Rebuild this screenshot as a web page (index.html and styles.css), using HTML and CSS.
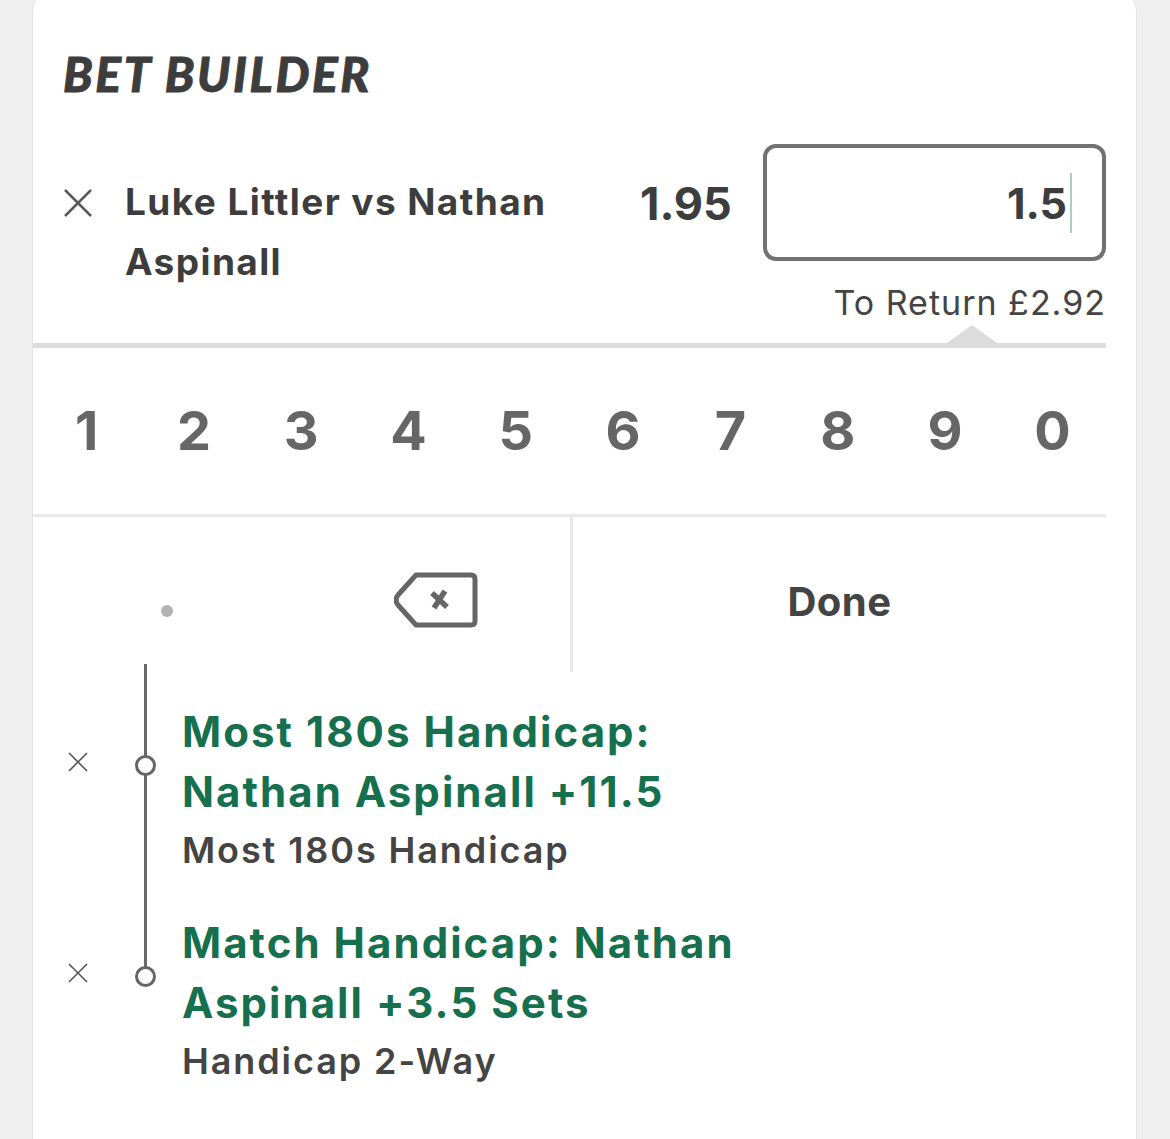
FILE: index.html
```html
<!DOCTYPE html>
<html lang="en">
<head>
<meta charset="utf-8">
<title>Bet Builder</title>
<link rel="stylesheet" href="styles.css">
</head>
<body>
<div class="card">
  <h1 class="title">BET BUILDER</h1>

  <div class="bet-row">
    <button class="remove" aria-label="Remove">
      <svg width="30" height="30" viewBox="0 0 30 30"><path d="M2 2 L28 28 M28 2 L2 28" stroke="#5a5a5a" stroke-width="2.5" fill="none"/></svg>
    </button>
    <div class="bet-name">Luke Littler vs Nathan Aspinall</div>
    <div class="odds">1.95</div>
    <div class="stake-col">
      <div class="stake">
        <span class="stake-value">1.5</span><span class="caret"></span>
      </div>
      <div class="returns">To Return £2.92</div>
    </div>
  </div>

  <div class="keypad">
    <div class="keys">
      <span class="key">1</span><span class="key">2</span><span class="key">3</span><span class="key">4</span><span class="key">5</span>
      <span class="key">6</span><span class="key">7</span><span class="key">8</span><span class="key">9</span><span class="key">0</span>
    </div>
    <div class="keys-bottom">
      <div class="keys-left">
        <span class="key-dot"></span>
        <span class="key-back">
          <svg width="84" height="56" viewBox="0 0 84 56"><path d="M22 3 H77 Q81 3 81 7 V49 Q81 53 77 53 H22 L4 33 Q0 28 4 23 Z" stroke="#666" stroke-width="5" fill="none" stroke-linejoin="round"/><path d="M38 21 L53 35 M51 19 L40 36" stroke="#666" stroke-width="5.5" fill="none"/></svg>
        </span>
      </div>
      <div class="key-done">Done</div>
    </div>
  </div>

  <div class="legs">
    <div class="leg">
      <span class="rail-top"></span>
      <span class="leg-x"><svg width="20" height="20" viewBox="0 0 20 20"><path d="M1 1 L19 19 M19 1 L1 19" stroke="#555" stroke-width="1.6" fill="none"/></svg></span>
      <span class="node"><span class="dot"></span></span>
      <div class="leg-title">Most 180s Handicap: Nathan Aspinall +11.5</div>
      <span class="rail-bottom"></span>
      <div class="leg-sub">Most 180s Handicap</div>
    </div>
    <div class="leg last">
      <span class="rail-top"></span>
      <span class="leg-x"><svg width="20" height="20" viewBox="0 0 20 20"><path d="M1 1 L19 19 M19 1 L1 19" stroke="#555" stroke-width="1.6" fill="none"/></svg></span>
      <span class="node"><span class="dot"></span></span>
      <div class="leg-title">Match Handicap: Nathan Aspinall +3.5 Sets</div>
      <span class="rail-bottom"></span>
      <div class="leg-sub">Handicap 2-Way</div>
    </div>
  </div>
</div>
</body>
</html>
```

FILE: styles.css
```css
* { box-sizing: border-box; }

html, body {
  margin: 0;
  padding: 0;
  background: #efefef;
  overflow: hidden;
}

body {
  font-family: Inter, Roboto, "Liberation Sans", Arial, sans-serif;
  color: #3d3d3d;
  height: 1139px;
}

.card {
  margin: -10px 0 0 32px;
  width: 1105px;
  min-height: 1200px;
  background: #fff;
  border: 1px solid #e3e3e3;
  border-radius: 22px 22px 0 0;
  padding-top: 53px;
}

.title {
  margin: 0 0 0 30px;
  font-family: Lato, "Open Sans", sans-serif;
  font-weight: 900;
  font-style: italic;
  font-size: 48px;
  line-height: 60px;
  letter-spacing: 2.6px;
  -webkit-text-stroke: 0.9px #3d3d3d;
  color: #3d3d3d;
}

.bet-row {
  display: flex;
  align-items: flex-start;
  margin-top: 40px;
  padding-left: 30px;
  padding-right: 30px;
}

.remove {
  border: 0;
  background: none;
  padding: 0;
  margin: 44px 0 0 0;
  width: 30px;
  height: 30px;
  flex: none;
  display: flex;
}

.bet-name {
  flex: 1;
  margin: 28px 0 0 32px;
  padding-right: 30px;
  font-size: 37px;
  line-height: 60px;
  font-weight: 700;
  letter-spacing: 1.4px;
  color: #3d3d3d;
}

.odds {
  flex: none;
  margin: 30px 0 0 3px;
  width: 123px;
  font-size: 45px;
  line-height: 60px;
  font-weight: 700;
  color: #3d3d3d;
}

.stake-col {
  flex: none;
  width: 343px;
}

.stake {
  height: 117px;
  border: 4px solid #717171;
  border-radius: 13px;
  display: flex;
  align-items: center;
  justify-content: flex-end;
  padding-right: 30px;
}

.stake-value {
  font-size: 43px;
  font-weight: 700;
  color: #3d3d3d;
  line-height: 60px;
}

.caret {
  width: 2px;
  height: 60px;
  background: #a9cfc3;
  margin-left: 3px;
}

.returns {
  text-align: right;
  margin-top: 20px;
  font-size: 34px;
  line-height: 44px;
  letter-spacing: 1px;
  color: #444;
}

.keypad {
  position: relative;
  margin-right: 30px;
  margin-top: 18px;
  border-top: 5px solid #dcdcdc;
}

.keypad::before {
  content: "";
  position: absolute;
  left: 914px;
  top: -23px;
  border-left: 25px solid transparent;
  border-right: 25px solid transparent;
  border-bottom: 18px solid #dcdcdc;
}

.keys {
  display: grid;
  grid-template-columns: repeat(10, 1fr);
  height: 169px;
  border-bottom: 3px solid #e8e8e8;
  align-items: center;
}

.key {
  text-align: center;
  font-size: 54px;
  font-weight: 700;
  color: #666;
  line-height: 60px;
}

.keys-bottom {
  display: grid;
  grid-template-columns: 540px 1fr;
  height: 155px;
}

.keys-left {
  display: grid;
  grid-template-columns: 1fr 1fr;
  align-items: center;
  justify-items: center;
  border-right: 3px solid #e8e8e8;
}

.key-dot {
  width: 12px;
  height: 12px;
  border-radius: 50%;
  background: #b3b3b3;
  margin-top: 33px;
}

.key-back {
  display: flex;
  margin-left: 0;
  margin-top: 10px;
}

.key-done {
  display: flex;
  align-items: center;
  justify-content: center;
  font-size: 40px;
  font-weight: 700;
  letter-spacing: 0.5px;
  color: #444;
  padding-top: 13px;
}

.legs {
  margin-top: -8px;
}

.leg {
  display: grid;
  grid-template-columns: 90px 44px 1fr;
  grid-template-rows: 35px 120px 56px;
}

.leg:first-child {
  grid-template-rows: 38px 120px 56px;
}

.rail-top,
.rail-bottom,
.node {
  grid-column: 2;
  background: linear-gradient(#6a6a6a, #6a6a6a) no-repeat center top / 3px 100%;
}

.rail-top { grid-row: 1; }
.node {
  grid-row: 2;
  display: flex;
  align-items: center;
  justify-content: center;
  padding-top: 6px;
}
.rail-bottom { grid-row: 3; }

.last .node { background-size: 3px 53%; }
.last .rail-bottom { background: none; }

.dot {
  width: 21px;
  height: 21px;
  border: 3px solid #666;
  border-radius: 50%;
  background: #fff;
}

.leg-x {
  grid-column: 1;
  grid-row: 2;
  display: flex;
  align-items: center;
  justify-content: center;
}

.leg-title {
  grid-column: 3;
  grid-row: 2;
  padding-left: 15px;
  width: 610px;
  font-size: 42px;
  line-height: 60px;
  font-weight: 700;
  letter-spacing: 2.05px;
  color: #16704e;
}

.leg-sub {
  grid-column: 3;
  grid-row: 3;
  padding-left: 15px;
  font-size: 36px;
  line-height: 56px;
  font-weight: 600;
  letter-spacing: 1.9px;
  color: #444;
}
```
